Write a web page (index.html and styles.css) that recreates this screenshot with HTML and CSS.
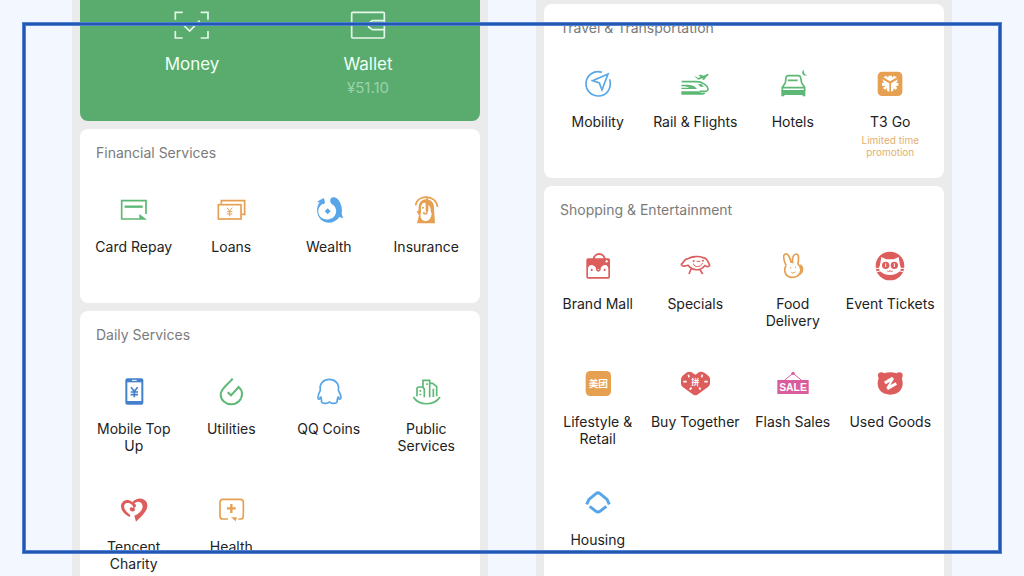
FILE: index.html
```html
<!DOCTYPE html>
<html lang="en">

<head>
    <meta charset="UTF-8">
    <meta name="viewport" content="width=device-width, initial-scale=1.0">
    <title>Services</title>
    <link rel="stylesheet" href="styles.css">
</head>

<body>
    <main class="board">
        <div class="phone">
            <section class="card wallet">
                <a class="pay" href="#">
                    <svg class="pay-icon" viewBox="0 0 108 84">
                        <path d="M4 26V4H26M80 4H102V26M102 60V81H80M26 81H4V60" />
                        <path d="M31 45L47 60L77 29" />
                    </svg>
                    <span>Money</span>
                </a>
                <a class="pay" href="#">
                    <svg class="pay-icon" viewBox="0 0 108 84">
                        <rect x="5" y="4" width="98" height="77" rx="3" />
                        <path d="M103 29H67L56 37V48L67 56H103" />
                    </svg>
                    <span>Wallet</span>
                    <span class="balance">¥51.10</span>
                </a>
            </section>

            <section class="card">
                <h2>Financial Services</h2>
                <div class="grid">
                    <a class="tile" href="#">
                        <svg class="icon green" viewBox="0 0 96 96">
                            <path class="line" d="M84 60V20H11V75H65" />
                            <path class="line thick" d="M20 38H74" />
                            <path class="fill" d="M64 60V77H87Z" />
                        </svg>
                        <span>Card Repay</span>
                    </a>
                    <a class="tile" href="#">
                        <svg class="icon orange" viewBox="0 0 96 96">
                            <path class="line" d="M19 29V20H89V61H80" />
                            <rect class="line" x="10" y="32" width="68" height="43" />
                            <path class="line thin" d="M36 41L44 51L52 41M44 51V67M36 53H52M36 60H52" />
                        </svg>
                        <span>Loans</span>
                    </a>
                    <a class="tile" href="#">
                        <svg class="icon blue" viewBox="0 0 96 96">
                            <path class="fill" d="M33 12L36 27L31 31L22 25L11 25L22 17Z" />
                            <path class="fill" d="M54 12C64 6 78 14 83 30C88 43 87 52 86 60L91 73L79 69C67 87 42 92 26 79C10 65 8 41 20 24L33 27C15 36 11 55 22 68C33 80 55 79 65 65C74 53 69 37 57 31C51 27 50 18 54 12Z" />
                            <path class="fill" d="M44 43L53 52L44 61L35 52Z" />
                        </svg>
                        <span>Wealth</span>
                    </a>
                    <a class="tile" href="#">
                        <svg class="icon orange" viewBox="0 0 96 96">
                            <path class="line" d="M17 34C20 1 78 0 83 39" />
                            <path class="fill" d="M21 88L27 64L20 53L26 48C24 27 33 17 49 16C66 17 73 29 72 45L75 88Z" />
                            <path class="paper" d="M33 40C33 27 44 23 47 28V51H55V33C65 40 60 51 65 59C64 72 57 81 46 81C33 80 29 68 33 55Z" />
                            <path class="line" d="M51 8V54C50 63 41 61 41 54" />
                            <circle class="fill" cx="39" cy="41" r="3" />
                        </svg>
                        <span>Insurance</span>
                    </a>
                </div>
            </section>

            <section class="card last">
                <h2>Daily Services</h2>
                <div class="grid">
                    <a class="tile" href="#">
                        <svg class="icon navy" viewBox="0 0 96 96">
                            <rect class="fill" x="22" y="7" width="54" height="79" rx="6" />
                            <rect class="paper" x="28" y="19" width="42" height="56" />
                            <path class="paper-line thin" d="M42 13H56" />
                            <path class="line" d="M39 34L49 46L59 34M49 46V64M38 48H60M38 56H60" />
                        </svg>
                        <span>Mobile Top Up</span>
                    </a>
                    <a class="tile" href="#">
                        <svg class="icon green" viewBox="0 0 96 96">
                            <path class="line heavy" d="M53 8C41 24 17 36 17 56C17 72 32 85 49 85C67 85 81 71 81 54C81 45 77 38 71 33L48 58L38 49" />
                        </svg>
                        <span>Utilities</span>
                    </a>
                    <a class="tile" href="#">
                        <svg class="icon blue" viewBox="0 0 96 96">
                            <path class="line" d="M23 65C18 72 14 71 15 63C16 53 20 48 22 43C18 23 32 10 49 10C66 10 80 23 76 43C80 51 84 56 84 64C84 72 79 71 75 66C73 71 70 73 73 76C71 84 54 84 49 78C44 84 27 84 25 76C28 73 25 71 23 65M19 64H27M72 64H80" />
                        </svg>
                        <span>QQ Coins</span>
                    </a>
                    <a class="tile" href="#">
                        <svg class="icon green" viewBox="0 0 96 96">
                            <path class="line" d="M10 63C27 90 72 90 90 63M21 61V39Q21 33 27 33H33Q43 33 43 41V64M39 32V13H59V64M59 22H68L80 32V61M70 38V63" />
                            <path class="line" d="M51 22V27M31 42V47M31 53V58" />
                        </svg>
                        <span>Public Services</span>
                    </a>
                    <a class="tile" href="#">
                        <svg class="icon red" viewBox="0 0 96 96">
                            <path class="fill" d="M35 69C22 62 9 51 9 37C9 20 28 12 42 23L51 30C56 33 55 39 49 40L51 48C46 56 35 52 35 45C36 39 43 38 45 42C49 35 34 23 24 28C12 35 20 51 37 63Z" />
                            <path class="fill" d="M43 24C56 9 78 10 86 25C94 45 77 61 54 83C52 74 50 71 49 65C67 58 77 44 73 32C69 22 58 20 49 29Z" />
                        </svg>
                        <span>Tencent Charity</span>
                    </a>
                    <a class="tile" href="#">
                        <svg class="icon orange" viewBox="0 0 96 96">
                            <path class="line" d="M39 75H24Q15 75 15 65V25Q15 16 24 16H76Q85 16 85 25V65Q85 75 76 75H70" />
                            <path class="fill" d="M48 70H66L62 82Z" />
                            <path class="line thick" d="M49 30V57M36 43H62" />
                        </svg>
                        <span>Health</span>
                    </a>
                </div>
            </section>
        </div>

        <div class="phone">
            <section class="card travel">
                <h2>Travel &amp; Transportation</h2>
                <div class="grid">
                    <a class="tile" href="#">
                        <svg class="icon blue" viewBox="0 0 96 96">
                            <path class="line" d="M60 10C37 2 13 18 12 43C11 65 29 81 49 81C74 81 91 57 83 31" />
                            <path class="line" d="M78 15L32 35L52 42L60 63Z" />
                        </svg>
                        <span>Mobility</span>
                    </a>
                    <a class="tile" href="#">
                        <svg class="icon green" viewBox="0 0 96 96">
                            <path class="fill" d="M46 22L52 23L57 27L65 24L58 18L64 17L74 20L86 14C91 16 89 19 82 23L76 32L70 33L72 27L58 32Z" />
                            <path class="line" d="M8 38H52C70 38 84 49 87 59C88 65 82 68 73 67H62" />
                            <path class="fill" d="M7 47H27C42 48 50 53 54 60H7V56H31C25 53 17 52 7 52ZM7 67H60L66 71H80C77 75 73 77 68 77H7ZM57 45H67L75 53H64Z" />
                        </svg>
                        <span>Rail &amp; Flights</span>
                    </a>
                    <a class="tile" href="#">
                        <svg class="icon green" viewBox="0 0 96 96">
                            <path class="line" d="M16 66V55L25 42L27 26Q28 20 34 20H63Q70 20 71 26L74 42L83 55V66M32 34H62M17 56H82" />
                            <path class="fill" d="M13 63H85V82H77V78H22V82H13Z" />
                            <path class="fill" d="M80 2C71 8 76 23 91 19C84 17 79 11 80 2Z" />
                        </svg>
                        <span>Hotels</span>
                    </a>
                    <a class="tile" href="#">
                        <svg class="icon orange" viewBox="0 0 96 96">
                            <rect class="fill" x="11" y="8" width="74" height="73" rx="13" />
                            <path class="paper" d="M28 25L38 20L42 26L44 20H53L55 26L59 20L69 25L48 37ZM25 31L46 43V68L39 65V58L33 62L27 57L34 51L24 50V41L30 42ZM72 31L51 43V68L58 65V58L65 62L70 57L64 51L73 50V41L67 42Z" />
                        </svg>
                        <span>T3 Go</span>
                        <small>Limited time promotion</small>
                    </a>
                </div>
            </section>

            <section class="card last">
                <h2>Shopping &amp; Entertainment</h2>
                <div class="grid">
                    <a class="tile" href="#">
                        <svg class="icon red" viewBox="0 0 96 96">
                            <path class="line heavy" d="M35 25C36 4 67 4 68 25" />
                            <rect class="fill" x="13" y="22" width="71" height="61" rx="5" />
                            <path class="paper" d="M18 78V54C18 39 35 39 42 51H56C63 39 79 39 79 54V78Z" />
                            <path class="line" d="M29 53V60M68 53V60" />
                            <path class="fill" d="M42 50H56V57Q49 67 42 57Z" />
                            <path class="paper-line thin" d="M74 27V35M70 31H78" />
                            <path class="paper" d="M46 54H52L49 58Z" />
                        </svg>
                        <span>Brand Mall</span>
                    </a>
                    <a class="tile" href="#">
                        <svg class="icon red" viewBox="0 0 96 96">
                            <path class="line" d="M27 24C37 15 62 15 72 20C84 20 88 33 92 43C89 49 81 47 77 44C66 61 40 60 27 43C19 46 8 47 7 40C15 36 14 22 27 24M36 54L30 69M62 54L71 69" />
                            <path class="line thin" d="M43 38C46 50 65 50 71 36M53 31H64" />
                            <circle class="fill" cx="44" cy="30" r="3" />
                            <circle class="fill" cx="72" cy="29" r="3" />
                        </svg>
                        <span>Specials</span>
                    </a>
                    <a class="tile" href="#">
                        <svg class="icon orange" viewBox="0 0 96 96">
                            <path class="line" d="M27 43C22 30 15 17 23 10C34 4 39 22 42 33L47 34C45 23 49 9 58 9C68 10 64 27 63 39C75 50 74 68 61 75C47 82 29 80 25 66C21 57 24 49 27 43" />
                            <path class="fill" d="M68 40C82 42 84 65 68 73C71 67 73 59 70 52Z" />
                            <path class="line thin" d="M43 63C44 67 50 68 55 62M41 48V52M56 47V51" />
                        </svg>
                        <span>Food Delivery</span>
                    </a>
                    <a class="tile" href="#">
                        <svg class="icon red" viewBox="0 0 96 96">
                            <circle class="fill" cx="48" cy="45" r="43" />
                            <path class="paper" d="M22 18L37 25H59L74 18L78 42C88 59 69 72 48 72C27 72 8 59 18 42Z" />
                            <circle class="fill" cx="35" cy="43" r="11" />
                            <circle class="fill" cx="61" cy="43" r="11" />
                            <path class="paper-line thin" d="M35 37V48M61 37V48M5 52H24M8 62L23 59M91 52H72M88 62L73 59" />
                            <path class="line thin" d="M40 60Q44 64 48 59Q52 64 56 60" />
                        </svg>
                        <span>Event Tickets</span>
                    </a>
                    <a class="tile" href="#">
                        <svg class="icon orange" viewBox="0 0 96 96">
                            <rect class="fill" x="11" y="6" width="76" height="75" rx="14" />
                            <text class="paper brand" x="49" y="55">美团</text>
                        </svg>
                        <span>Lifestyle &amp; Retail</span>
                    </a>
                    <a class="tile" href="#">
                        <svg class="icon red" viewBox="0 0 96 96">
                            <path class="fill" d="M49 17L61 9Q69 6 76 11L88 20Q93 24 93 31V45Q92 50 87 54L55 77Q49 81 43 77L11 54Q6 50 6 44V30Q7 24 11 20L24 10Q31 6 38 10Z" />
                            <text class="paper group" x="49" y="47">拼</text>
                            <path class="paper-line" d="M28 17L30 25M70 17L68 25M13 38H23M76 38H86M32 62L38 56M61 55L64 62" />
                        </svg>
                        <span>Buy Together</span>
                    </a>
                    <a class="tile" href="#">
                        <svg class="icon pink" viewBox="0 0 96 96">
                            <path class="line thin" d="M22 34L48 13L74 34" />
                            <circle class="fill" cx="48" cy="13" r="5" />
                            <rect class="fill" x="1" y="33" width="94" height="42" />
                            <text class="paper sale" x="48" y="65">SALE</text>
                        </svg>
                        <span>Flash Sales</span>
                    </a>
                    <a class="tile" href="#">
                        <svg class="icon red" viewBox="0 0 96 96">
                            <circle class="fill" cx="22" cy="20" r="10" />
                            <circle class="fill" cx="76" cy="20" r="10" />
                            <path class="fill" d="M49 10C74 10 86 24 86 43C86 63 72 77 49 77C25 77 11 63 11 43C11 24 24 10 49 10Z" />
                            <path class="paper" d="M30 38L54 23L60 30L49 48L65 40L69 47L42 63L37 56L48 38L35 46Z" />
                        </svg>
                        <span>Used Goods</span>
                    </a>
                    <a class="tile" href="#">
                        <svg class="icon blue" viewBox="0 0 96 96">
                            <path class="line bold" d="M14 52L21 37L42 20Q48 15 54 20L75 37L82 52" />
                            <path class="line bold" d="M23 58L42 73Q48 77 54 73L73 58" />
                        </svg>
                        <span>Housing</span>
                    </a>
                </div>
            </section>
        </div>
    </main>
    <div class="frame"></div>
</body>

</html>
```
FILE: styles.css
```css
* {
    margin: 0;
    padding: 0;
    box-sizing: border-box;
}
body {
    position: relative;
    height: 100vh;
    overflow: hidden;
    background-color: #f3f7ff;
    font-family: Inter, "Liberation Sans", "Noto Sans CJK SC", sans-serif;
    font-size: 14px;
    line-height: 17px;
    color: #222;
}
a {
    color: inherit;
    text-decoration: none;
}
.board {
    display: flex;
    gap: 48px;
    height: 100%;
    padding: 0 72px;
}
.phone {
    flex: 1;
    display: flex;
    flex-direction: column;
    gap: 8px;
    padding: 0 8px;
    background-color: #ebebeb;
}
.card {
    flex-shrink: 0;
    padding: 16px 5px 0;
    border-radius: 8px;
    background-color: #fff;
}
.card.last {
    flex: 1 0 auto;
    border-radius: 8px 8px 0 0;
}
.card.travel {
    margin-top: 4px;
}
.card h2 {
    margin: 0 11px 33px;
    font-size: 14px;
    font-weight: 400;
    line-height: 16px;
    color: #7b7b7b;
}

/* green money / wallet card */
.card.wallet {
    display: flex;
    padding: 11px 24px 21px;
    border-radius: 0 0 8px 8px;
    background-color: #59ab6e;
    color: #f0fff4;
}
.pay {
    flex: 1;
    display: flex;
    flex-direction: column;
    align-items: center;
    font-size: 17px;
    line-height: 24px;
}
.pay-icon {
    width: 36px;
    height: 28px;
    margin-bottom: 13px;
    fill: none;
    stroke: #e6f8ea;
    stroke-width: 5;
}
.pay .balance {
    font-size: 15px;
    color: #9bd3a8;
}

/* service tiles */
.grid {
    display: grid;
    grid-template-columns: repeat(4, 1fr);
    row-gap: 9px;
}
.tile {
    display: flex;
    flex-direction: column;
    align-items: center;
    min-height: 109px;
    padding: 0 4px;
    text-align: center;
}
.tile span {
    max-width: 100%;
}
.tile small {
    margin-top: 4px;
    padding: 0 8px;
    font-size: 10px;
    line-height: 12px;
    color: #dfb06e;
}
.icon {
    width: 32px;
    height: 32px;
    margin-bottom: 12px;
    overflow: visible;
}
.green {
    color: #5cb874;
}
.orange {
    color: #e6a052;
}
.blue {
    color: #58a6e8;
}
.navy {
    color: #4580cc;
}
.red {
    color: #dd5c5c;
}
.pink {
    color: #d95c9c;
}
.fill {
    fill: currentColor;
}
.paper {
    fill: #fff;
}
.line {
    fill: none;
    stroke: currentColor;
    stroke-width: 5;
}
.paper-line {
    fill: none;
    stroke: #fff;
    stroke-width: 5;
}
.heavy {
    stroke-width: 6;
}
.thick {
    stroke-width: 7;
}
.bold {
    stroke-width: 9;
}
.thin {
    stroke-width: 3;
}
.icon text {
    font-weight: 700;
    text-anchor: middle;
}
.icon .brand {
    font-family: "Noto Sans CJK SC", sans-serif;
    font-size: 29px;
}
.icon .group {
    font-family: "Noto Sans CJK SC", sans-serif;
    font-size: 24px;
}
.icon .sale {
    font-family: "Liberation Sans", sans-serif;
    font-size: 31px;
}

/* blue outline drawn over both screens */
.frame {
    position: absolute;
    inset: 23px;
    border: 2px solid #2457b0;
    box-shadow: 0 0 0 1px #4f83d2, inset 0 0 0 1px #4f83d2;
    pointer-events: none;
}
```
